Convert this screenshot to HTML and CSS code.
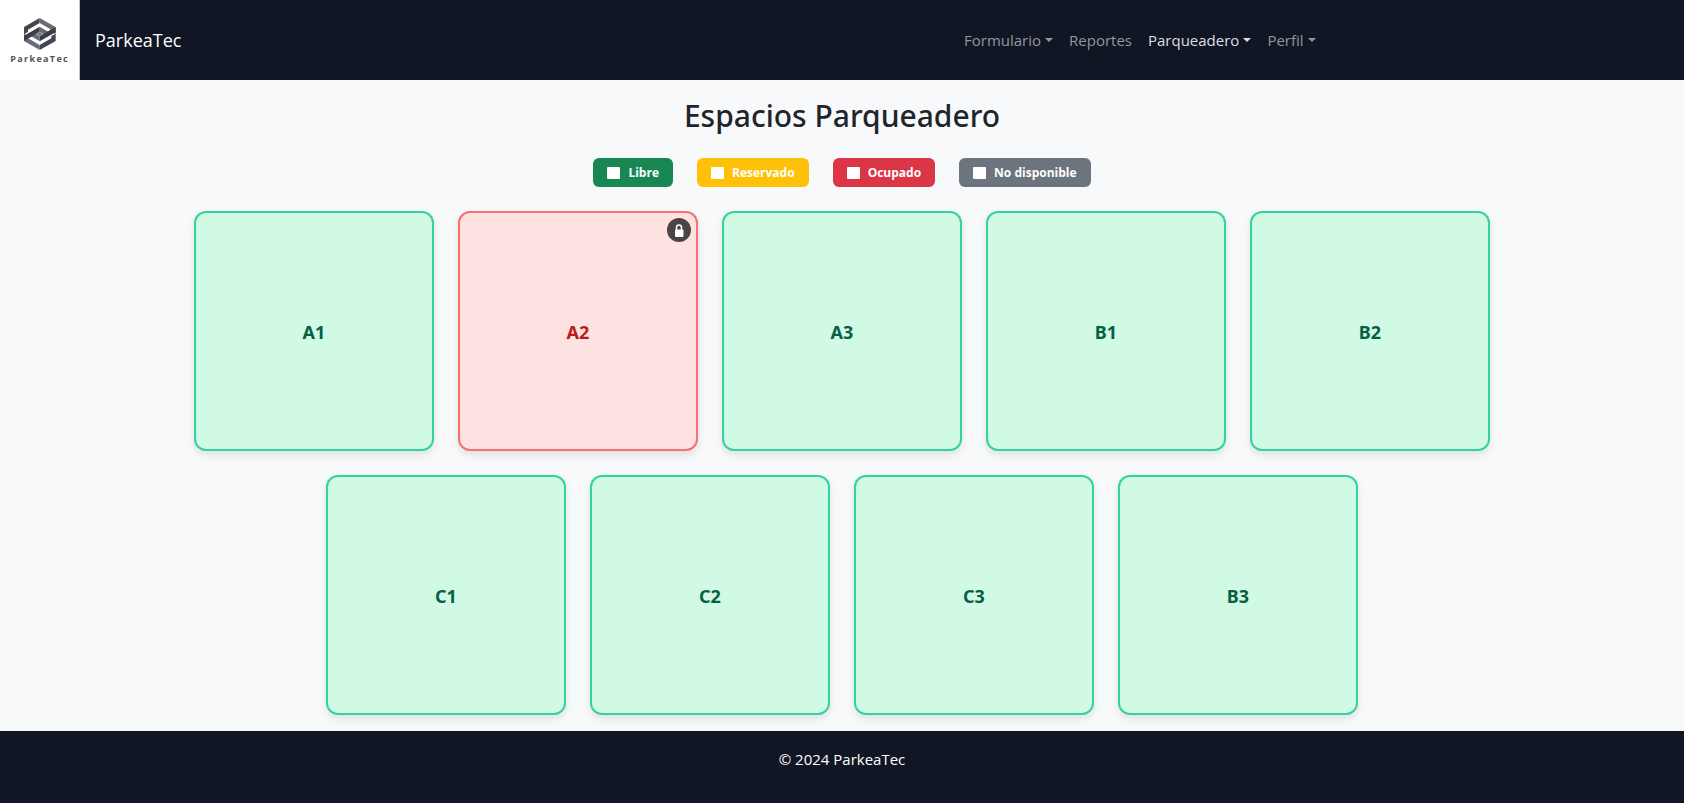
FILE: index.html
```html
<!DOCTYPE html>
<html lang="es">
<head>
<meta charset="utf-8">
<title>ParkeaTec</title>
<link rel="stylesheet" href="styles.css">
</head>
<body>
<header class="navbar">
  <a class="brand" href="#">
    <svg class="brand-logo" viewBox="0 0 240 240" role="img" aria-label="Logo ParkeaTec">
      <path fill="#f8f9fb" d="M0 0H239V240H0Z"/>
      <path fill="#fff" d="M9 0H238V240H9Q0 240 0 231V9Q0 0 9 0Z"/>
      <path fill="#43464f" d="M72 81 119 54V69L84 89V96L72 103Z"/>
      <path fill="#696c75" d="M119 54 167 81V103L154 96V89L119 69Z"/>
      <path fill="#696c75" d="M72 101 84 108V115L119 135V150L72 123Z"/>
      <path fill="#43464f" d="M167 101V123L119 150V135L154 115V108Z"/>
      <path fill="#696c75" d="M119 80 155 101 143 109 119 95Z"/>
      <path fill="#696c75" d="M84 103 96 95 119 109V124Z"/>
      <path fill="#3b3e47" d="M72 107 119 80V95L84 116 72 122Z"/>
      <path fill="#3b3e47" d="M167 82V97L119 124V109L154 88Z"/>
      <path fill="#7d8087" d="M119 95 130 102 119 109 108 102Z"/>
      <text class="logo-text" x="119" y="187" text-anchor="middle">ParkeaTec</text>
    </svg>
    <span>ParkeaTec</span>
  </a>
  <nav class="nav">
    <a class="nav-link dropdown" href="#">Formulario</a>
    <a class="nav-link" href="#">Reportes</a>
    <a class="nav-link dropdown active" href="#">Parqueadero</a>
    <a class="nav-link dropdown" href="#">Perfil</a>
  </nav>
</header>
<main class="container">
  <h2 class="title">Espacios Parqueadero</h2>
  <div class="legend">
    <span class="badge free">Libre</span>
    <span class="badge reserved">Reservado</span>
    <span class="badge busy">Ocupado</span>
    <span class="badge disabled">No disponible</span>
  </div>
  <div class="spaces">
    <button class="space" type="button">A1</button>
    <button class="space occupied" type="button">A2
      <span class="lock"><svg viewBox="0 0 24 24" aria-hidden="true"><path fill="none" stroke="#fff" stroke-width="1.5" d="M9.500 12V9.500a2.500 2.500 0 0 1 5 0V12"/><rect x="8" y="11.500" width="8.500" height="7.500" rx="1" fill="#fff"/></svg></span>
    </button>
    <button class="space" type="button">A3</button>
    <button class="space" type="button">B1</button>
    <button class="space" type="button">B2</button>
    <button class="space" type="button">C1</button>
    <button class="space" type="button">C2</button>
    <button class="space" type="button">C3</button>
    <button class="space" type="button">B3</button>
  </div>
</main>
<footer class="footer">© 2024 ParkeaTec</footer>
</body>
</html>
```
FILE: styles.css
```css
* { box-sizing: border-box; }
body {
  margin: 0;
  min-height: 100vh;
  display: flex;
  flex-direction: column;
  background: #f8f9fb;
  color: #212529;
  font: 15px/24px "Open Sans", "Noto Sans", sans-serif;
}
.navbar {
  display: flex;
  align-items: center;
  justify-content: space-between;
  background: #101624;
}
.brand {
  display: flex;
  align-items: center;
  gap: 15px;
  color: #fff;
  font-size: 18px;
  text-decoration: none;
}
.brand-logo { width: 80px; height: 80px; }
.logo-text {
  font: 700 27px "Open Sans", sans-serif;
  letter-spacing: 4px;
  fill: #50535b;
}
.nav { display: flex; width: 728px; }
.nav-link {
  display: flex;
  align-items: center;
  gap: 4px;
  padding: 8px;
  color: #94979d;
  text-decoration: none;
}
.nav-link.active { color: #dcdee0; }
.dropdown::after {
  content: "";
  border: 4px solid transparent;
  border-top-color: currentColor;
  border-bottom: 0;
}
.container {
  width: 100%;
  max-width: 1320px;
  margin: 0 auto;
  padding: 17px 12px 16px;
}
.title {
  margin: 0 0 23px;
  font: 500 30px/38px "Noto Sans", "Open Sans", sans-serif;
  text-align: center;
}
.legend {
  display: flex;
  justify-content: center;
  gap: 24px;
  margin-bottom: 24px;
}
.badge {
  display: flex;
  align-items: center;
  gap: 8px;
  padding: 8px 14px;
  border-radius: 6px;
  color: #fff;
  font-size: 12px;
  font-weight: 700;
  line-height: 13px;
}
.badge::before {
  content: "";
  width: 13px;
  height: 12px;
  border-radius: 1px;
  background: #fff;
}
.free { background: #198754; }
.reserved { background: #ffc107; }
.busy { background: #dc3545; }
.disabled { background: #6c757d; }
.spaces {
  display: flex;
  flex-wrap: wrap;
  justify-content: center;
  gap: 24px;
}
.space {
  position: relative;
  width: 240px;
  aspect-ratio: 1;
  padding: 2px 0 0;
  border: 2px solid #34d399;
  border-radius: 12px;
  background: #d1fae5;
  color: #065f46;
  font: 700 18px/24px "Noto Sans", "Open Sans", sans-serif;
  box-shadow: 0 4px 8px rgba(0, 0, 0, 0.1);
}
.occupied { border-color: #f87171; background: #fee2e2; color: #b91c1c; }
.lock {
  position: absolute;
  top: 5px;
  right: 5px;
  width: 24px;
  height: 24px;
  border-radius: 50%;
  background: #4c4444;
}
.lock svg { display: block; }
.footer {
  flex: 1;
  padding: 16px;
  background: #101624;
  color: #fff;
  text-align: center;
}
```
